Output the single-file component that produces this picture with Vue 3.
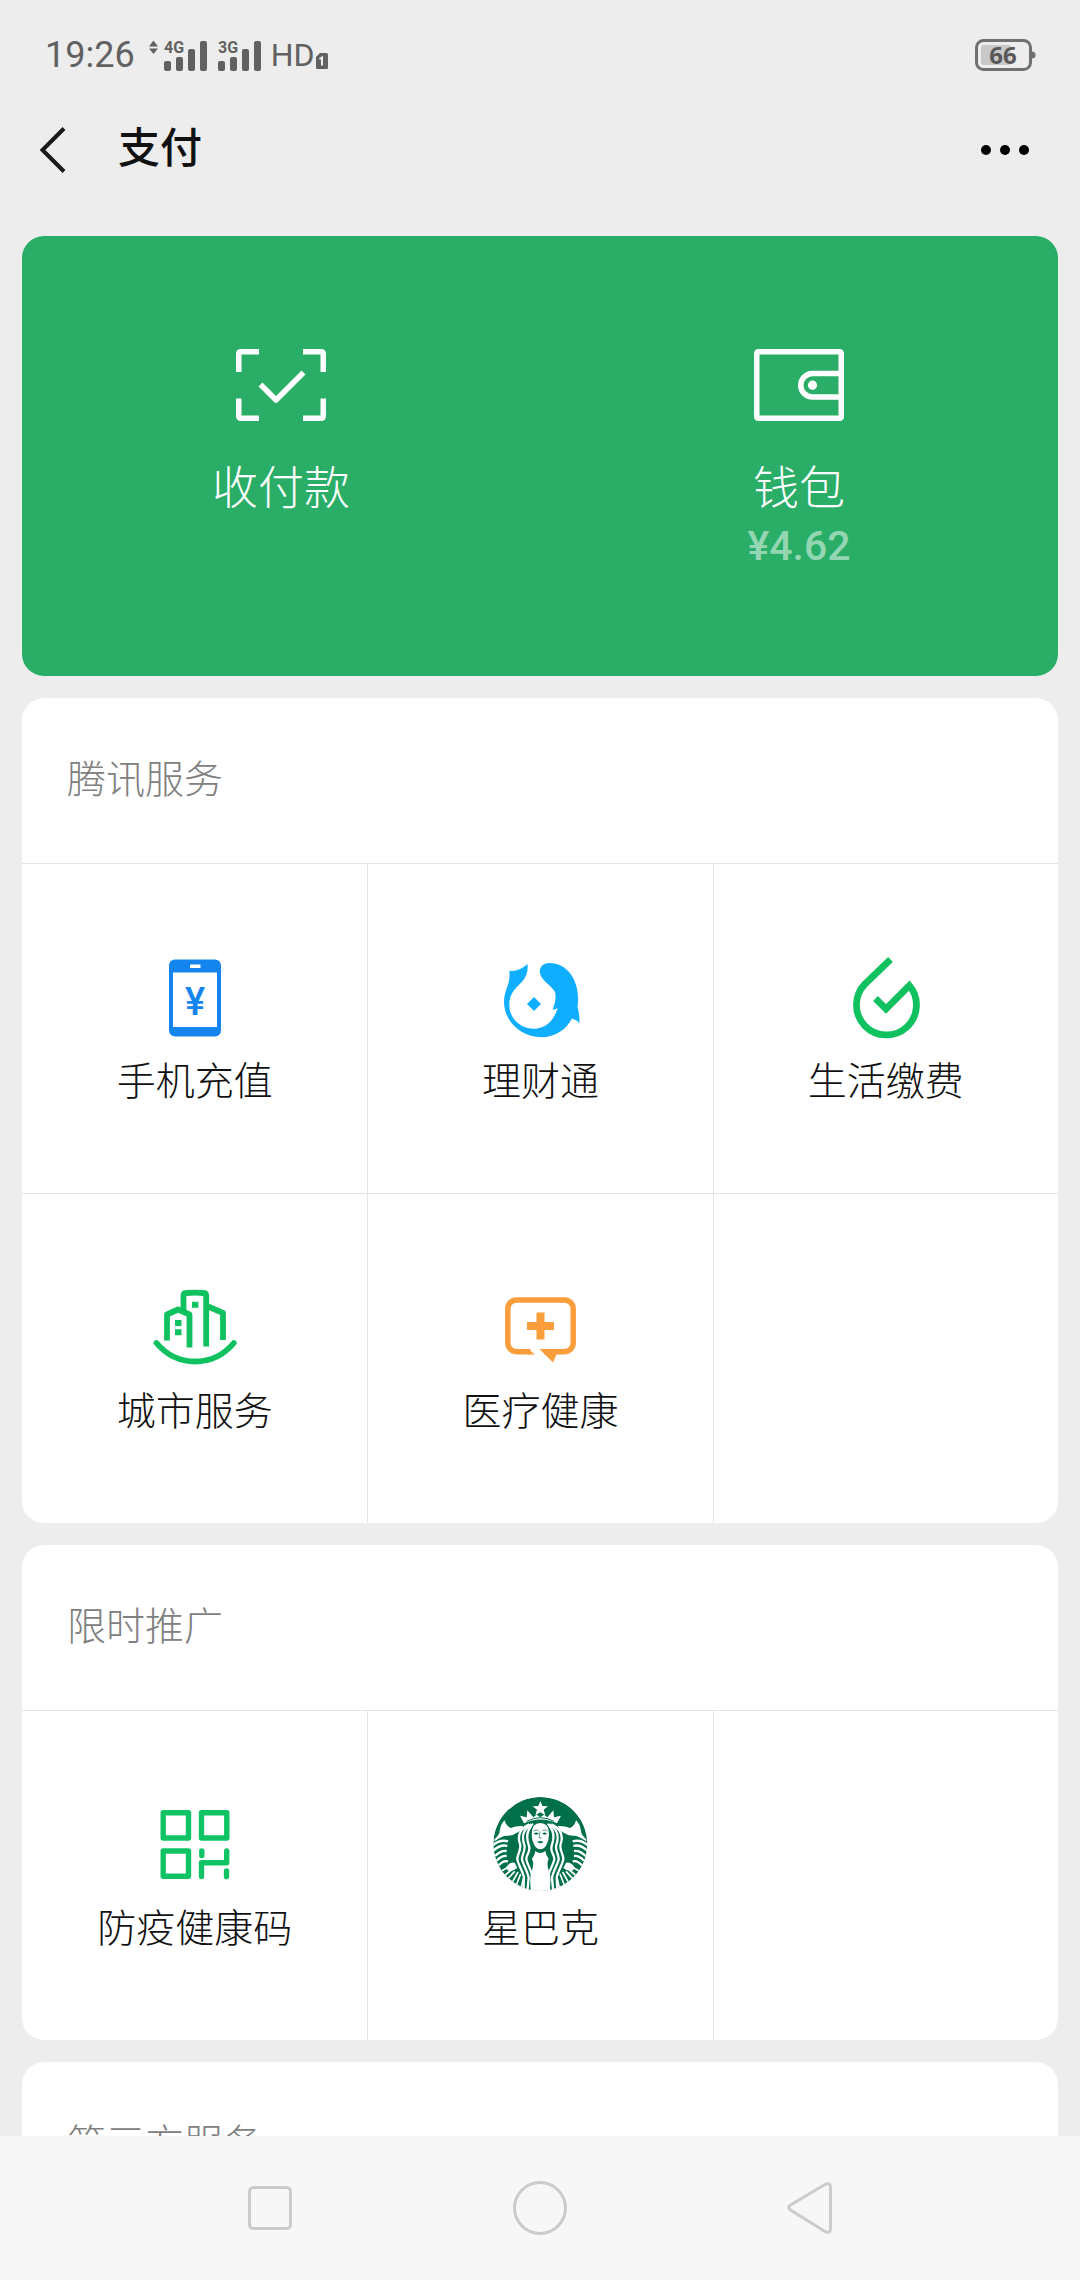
<script setup>
import { ref } from 'vue'

const clock   = ref('19:26')
const battery = ref(66)
const balance = ref('4.62')

// ── Networks shown in the status bar ──────────────────────────────────────────
const networks = [
  { label: '4G', arrows: true },
  { label: '3G', arrows: false },
]

// ── Service groups, three tiles to a row ──────────────────────────────────────
const groups = [
  {
    title: '腾讯服务',
    items: [
      { name: '手机充值', icon: 'phone' },
      { name: '理财通',   icon: 'fish' },
      { name: '生活缴费', icon: 'drop' },
      { name: '城市服务', icon: 'city' },
      { name: '医疗健康', icon: 'medical' },
    ],
  },
  {
    title: '限时推广',
    items: [
      { name: '防疫健康码', icon: 'qr' },
      { name: '星巴克',     icon: 'coffee' },
    ],
  },
  { title: '第三方服务', items: [] },
]

// blank tiles that complete the last row
function blanks(items) {
  return (3 - (items.length % 3)) % 3
}
</script>

<template>
  <div class="screen">

    <!-- Status bar -->
    <div class="status">
      <span class="status__time">{{ clock }}</span>
      <svg
        v-for="net in networks"
        :key="net.label"
        class="status__signal"
        :width="net.arrows ? 58 : 44"
        height="36"
        :viewBox="net.arrows ? '-15 -3 58 36' : '-1 -3 44 36'"
      >
        <path v-if="net.arrows" d="M-15 6.500l4.500-6 4.500 6zM-15 8.500h9l-4.500 5.500z" />
        <text x="0" y="13" class="status__net">{{ net.label }}</text>
        <rect x="0" y="21" width="7" height="10" rx="2" />
        <rect x="12" y="17" width="7" height="14" rx="2" />
        <rect x="24" y="9" width="7" height="22" rx="2" />
        <rect x="36" y="1" width="7" height="30" rx="2" />
      </svg>
      <span class="status__hd">HD</span>
      <svg class="status__sim" width="12" height="16" viewBox="0 0 12 16">
        <path d="M4 0h6.500a1.500 1.500 0 0 1 1.500 1.500v13a1.500 1.500 0 0 1-1.500 1.500h-9A1.500 1.500 0 0 1 0 14.500V4z" />
        <path d="M3.500 6l2.500-1.500v8" fill="none" stroke="#ededed" stroke-width="2" />
      </svg>
      <svg class="status__battery" width="62" height="34" viewBox="0 0 62 34">
        <rect x="2.500" y="2.500" width="54" height="29" rx="7" fill="none" stroke="#707070" stroke-width="3" />
        <path d="M58 13.500a3.500 3.500 0 0 1 0 7z" fill="#707070" />
        <rect x="7" y="7" width="30" height="20" rx="3" fill="#c9c9c9" />
        <text x="29" y="26" text-anchor="middle" class="status__level">{{ battery }}</text>
      </svg>
    </div>

    <!-- Title bar -->
    <header class="bar">
      <button class="bar__back" aria-label="返回">
        <svg width="28" height="48" viewBox="0 0 28 48">
          <path d="M25 2.500L3.500 24 25 45.500" fill="none" stroke="#191919" stroke-width="4" />
        </svg>
      </button>
      <h1 class="bar__title">支付</h1>
      <button class="bar__more" aria-label="更多">
        <svg width="50" height="12" viewBox="0 0 50 12">
          <circle cx="6" cy="6" r="5" /><circle cx="25" cy="6" r="5" /><circle cx="44" cy="6" r="5" />
        </svg>
      </button>
    </header>

    <main class="content">

      <!-- Pay / wallet -->
      <section class="pay">
        <button class="pay__item">
          <svg width="90" height="72" viewBox="0 0 90 72" fill="none" stroke="#fff" stroke-width="5.500">
            <path d="M2.750 23V5q0-2.250 2.250-2.250h18M67 2.750h18q2.250 0 2.250 2.250v18M87.250 49.500V67q0 2.250-2.250 2.250H67M23 69.250H5q-2.250 0-2.250-2.250V49.500" />
            <path d="M24.500 35.500L40 51l27.500-27.500" stroke-linejoin="round" />
          </svg>
          <span class="pay__name">收付款</span>
        </button>
        <button class="pay__item">
          <svg width="90" height="72" viewBox="0 0 90 72" fill="none" stroke="#fff" stroke-width="5.500">
            <rect x="2.750" y="2.750" width="84.500" height="66.500" rx="1.500" />
            <path d="M87 24.500H58.500a11.750 11.750 0 0 0 0 23.500H87" />
            <circle cx="58.500" cy="36.200" r="4.600" fill="#fff" stroke="none" />
          </svg>
          <span class="pay__name">钱包</span>
          <span class="pay__amount">¥{{ balance }}</span>
        </button>
      </section>

      <!-- Service groups -->
      <section v-for="group in groups" :key="group.title" class="group">
        <h2 class="group__title">{{ group.title }}</h2>
        <div v-if="group.items.length" class="group__grid">
          <button v-for="item in group.items" :key="item.name" class="tile">

            <svg v-if="item.icon === 'phone'" class="tile__icon" viewBox="0 0 96 96">
              <rect x="22" y="10.500" width="52" height="77" rx="6" fill="#1485ee" />
              <rect x="26" y="23.500" width="44" height="54.500" fill="#fff" />
              <rect x="43" y="15.500" width="10.500" height="3.500" fill="#fff" />
              <text x="48" y="66" text-anchor="middle" class="tile__yen">¥</text>
            </svg>

            <svg v-else-if="item.icon === 'fish'" class="tile__icon" viewBox="0 0 96 96" fill="#10aeff">
              <path d="M35.500 15Q27 23 17.300 21.700Q18.500 31 14.500 40C5 64 24 88.300 49.700 88.300C63 88 74 81 80 69.500Q85 71 87.300 74.500Q88 66 85.500 58C89 36 78 13.700 57 14C50 14 46.500 20 48.200 25C50 32 59 36 63 43Q65 51 60.500 60.500Q63 61 65.700 59C62 72 53 79.700 42 79.700C28 79.700 17.300 69 17.300 56C17.300 42 27 37 31.500 31Q36.500 24 35.500 15z" />
              <path d="M42 48l7 7-7 7-7-7z" />
            </svg>

            <svg v-else-if="item.icon === 'drop'" class="tile__icon" viewBox="0 0 96 96">
              <path d="M52.500 10.500L27 35A30 30 0 1 0 71.300 36.500L48 60 37.500 49.500" fill="none" stroke="#10c160" stroke-width="6.800" />
            </svg>

            <svg v-else-if="item.icon === 'city'" class="tile__icon" viewBox="0 0 96 96" fill="none" stroke="#10c160" stroke-width="5.800" stroke-linejoin="round">
              <path d="M9.500 64Q25 82.500 48.200 82.500T86.800 64" stroke-linecap="round" />
              <path d="M20 61.500V35.500L31 30.500 42.500 35.500V68.500" />
              <path d="M36.500 31V17q0-3 3-3Q48 13.200 56.500 14q2.700 0 2.700 3V67.500" />
              <path d="M60 27l16 7v27" />
              <path d="M45 22.700h6.400v6H45zM28 41h6.500v6H28zM28 50.300h6.500v6H28z" fill="#10c160" stroke="none" />
            </svg>

            <svg v-else-if="item.icon === 'medical'" class="tile__icon" viewBox="0 0 96 96" fill="#fa9d3b">
              <path d="M38.500 72.700H24.500a8.700 8.700 0 0 1-8.700-8.700V29.700a8.700 8.700 0 0 1 8.700-8.700h48a8.700 8.700 0 0 1 8.700 8.700V64a8.700 8.700 0 0 1-8.700 8.700H52" fill="none" stroke="#fa9d3b" stroke-width="5.500" />
              <path d="M36 70l7 5.500h-7zM47.500 70H66l-1.500 5.500-3.500 8z" />
              <path d="M44.500 33.500h8v9.500h9.500v8h-9.500v9.500h-8v-9.500H35v-8h9.500z" />
            </svg>

            <svg v-else-if="item.icon === 'qr'" class="tile__icon" viewBox="0 0 96 96" fill="none" stroke="#10c466" stroke-width="5.400" stroke-linejoin="round">
              <path d="M16.200 16.700h25.300V42H16.200zM54.500 16.700h25.300V42H54.500zM16.200 55h25.300v25.300H16.200z" />
              <path d="M54.500 80.500V66.700h25.200V55" stroke-linecap="round" />
              <path d="M54.800 55v4.500M79.500 75v5.500" stroke-linecap="round" />
            </svg>

            <svg v-else-if="item.icon === 'coffee'" class="tile__icon" viewBox="66 78 288 288">
              <defs>
                <clipPath id="seal"><circle cx="211" cy="222" r="141" /></clipPath>
                <g id="siren-side" fill="none" stroke="#fff">
                  <!-- tail fin and scales -->
                  <path d="M73 208Q86 196 88 188Q92 160 104 151Q108 168 122 174Q138 167 159 168Q154 184 138 190Q128 199 108 197Q94 199 73 214z" fill="#fff" stroke="none" />
                  <path d="M68 226Q90 207 114 214M70 242Q92 222 112 228M75 258Q94 240 110 243M80 272Q96 256 110 258M86 286Q100 270 114 274" stroke-width="7" />
                  <path d="M108 292Q118 276 134 278L142 294Q124 308 112 300z" fill="#fff" stroke="none" />
                  <path d="M96 302L114 292M106 315L124 300M114 326L134 304M128 335L144 306M139 345L152 312M154 352L161 322" stroke-width="5" />
                  <!-- hair -->
                  <path d="M178 163C140 180 145 207 150 222S143 252 142 265S158 302 162 322T160 364" stroke-width="7" />
                  <path d="M184 163C151 184 158 210 163 225S155 254 156 267S172 302 176 323T172 366" stroke-width="7" />
                  <path d="M190 162C164 183 171 211 177 228S168 254 169 267S186 304 188 323T184 368" stroke-width="7" />
                </g>
              </defs>
              <g clip-path="url(#seal)">
                <circle cx="211" cy="222" r="141" fill="#00704a" />
                <path d="M211 93l6 15 17 1-13 10 5 17-15-9-15 9 5-17-13-10 17-1z" fill="#fff" />
                <path d="M162 160L150 137 170 142 172 121 190 142 200 134 211 142 222 134 232 142 250 121 252 142 273 137 261 160Q211 137 162 160z" fill="#fff" />
                <path d="M170 154Q211 132 252 154" fill="none" stroke="#00704a" stroke-width="3" />
                <use href="#siren-side" />
                <use href="#siren-side" transform="translate(422 0) scale(-1 1)" />
                <path d="M211 157C191 157 183 174 183 193C183 218 195 240 211 240S239 218 239 193C239 174 231 157 211 157z" fill="#fff" stroke="#00704a" stroke-width="4" />
                <path d="M196 243Q211 255 226 243Q228 257 236 266Q228 285 238 305Q246 334 236 368H186Q176 334 184 305Q194 285 186 266Q194 257 196 243z" fill="#fff" />
                <g fill="none" stroke="#00704a" stroke-width="2">
                  <path d="M190 183Q198 177 206 182M217 182Q225 177 232 183M210 184L207 203Q211 206 215 203" />
                  <path d="M192 191Q199 186 205 191Q199 194 192 191zM218 191Q224 186 230 191Q224 194 218 191zM203 216Q211 212 219 216Q211 222 203 216z" fill="#00704a" />
                </g>
              </g>
            </svg>

            <span class="tile__name">{{ item.name }}</span>
          </button>
          <div v-for="n in blanks(group.items)" :key="n" class="tile"></div>
        </div>
      </section>
    </main>

    <!-- System keys -->
    <nav class="keys">
      <button class="keys__btn" aria-label="最近任务">
        <svg width="54" height="54" viewBox="0 0 54 54"><rect x="6.500" y="6.500" width="41" height="41" rx="4" /></svg>
      </button>
      <button class="keys__btn" aria-label="主屏幕">
        <svg width="54" height="54" viewBox="0 0 54 54"><circle cx="27" cy="27" r="25.500" /></svg>
      </button>
      <button class="keys__btn" aria-label="后退">
        <svg width="54" height="54" viewBox="0 0 54 54"><path d="M42 3.500L7.500 24q-3.500 2.500 0 5L42 50.500q5.500 2.500 5.500-3v-41q0-5.500-5.500-3z" /></svg>
      </button>
    </nav>

  </div>
</template>

<style>
body { background: #ededed; }
</style>

<style scoped>
.screen {
  height: 100vh;
  display: flex; flex-direction: column;
  overflow: hidden;
  background: #ededed;
  font-family: "Noto Sans CJK SC", sans-serif;
  font-weight: 300;
  color: #111;
}

button {
  margin: 0; padding: 0;
  border: none; background: none;
  font: inherit; color: inherit; cursor: pointer;
}
svg { display: block; flex-shrink: 0; }

/* Status bar */
.status {
  height: 110px; flex-shrink: 0;
  display: flex; align-items: center;
  padding: 0 44px 0 45px;
  font-family: Roboto, sans-serif; font-weight: 400;
  color: #616161; fill: #616161;
}
.status__time    { font-size: 36px; line-height: 40px; margin-right: 14px; }
.status__signal  { margin-right: 10px; overflow: visible; }
.status__net     { font-size: 16px; font-weight: 700; }
.status__hd      { font-size: 32px; line-height: 40px; }
.status__sim     { margin: 12px 0 0 2px; }
.status__battery { margin-left: auto; }
.status__level   { font-family: "Noto Sans", sans-serif; font-size: 24px; font-weight: 700; fill: #585858; }

/* Title bar */
.bar {
  height: 80px; flex-shrink: 0;
  display: flex; align-items: center;
  padding: 0 50px 0 39px;
}
.bar__title { margin: 0 auto 0 51px; padding-bottom: 10px; font-size: 42px; line-height: 60px; font-weight: 500; }

/* Content */
.content {
  flex: 1; min-height: 0; overflow: hidden;
  display: flex; flex-direction: column; gap: 22px;
  padding: 46px 22px 0;
}
.content > * { flex-shrink: 0; }

/* Pay card */
.pay {
  display: grid; grid-template-columns: 1fr 1fr;
  padding: 113px 0 102px;
  border-radius: 22px;
  background: #2aae67;
  color: #fff;
}
.pay__item   { display: flex; flex-direction: column; align-items: center; }
.pay__name   { margin-top: 33px; font-size: 46px; line-height: 60px; }
.pay__amount { margin-top: 4px; font-family: Roboto, sans-serif; font-size: 41px; line-height: 56px; font-weight: 500; color: #94d6b3; }

/* Group card */
.group        { border-radius: 22px; background: #fff; overflow: hidden; }
.group__title { margin: 0; padding: 52px 45px 61px; font-size: 39px; line-height: 52px; font-weight: 300; color: #808080; }
.group__grid  { display: grid; grid-template-columns: repeat(3, 1fr); }

.tile {
  display: flex; flex-direction: column; align-items: center;
  padding: 85px 0 89px;
  border-top: 1px solid #e4e4e4;
}
.tile:not(:nth-child(3n + 1)) { border-left: 1px solid #e4e4e4; }
.tile__icon { width: 96px; height: 96px; }
.tile__name { margin-top: 7px; font-size: 39px; line-height: 52px; }
.tile__yen  { font-family: Roboto, sans-serif; font-size: 38px; font-weight: 500; fill: #1485ee; }

/* System keys */
.keys {
  height: 144px; flex-shrink: 0;
  display: grid; grid-template-columns: repeat(3, 1fr);
  padding: 0 12.5%;
  background: #f7f7f7;
}
.keys__btn     { display: flex; align-items: center; justify-content: center; }
.keys__btn svg { fill: none; stroke: #cbcbcb; stroke-width: 3; }
</style>
